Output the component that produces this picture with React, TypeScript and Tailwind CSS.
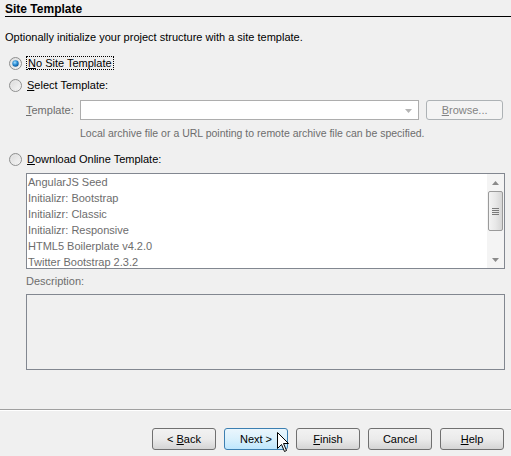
import React from "react";

function Radio({ checked }: { checked?: boolean }) {
  return (
    <svg width="13" height="13" viewBox="0 0 13 13" className="shrink-0">
      <defs>
        <linearGradient id={checked ? "rg1" : "rg0"} x1="0" y1="0" x2="1" y2="1">
          <stop offset="0" stopColor="#d6d6d6" />
          <stop offset="1" stopColor="#fbfbfb" />
        </linearGradient>
        <radialGradient id="dot" cx="0.4" cy="0.35" r="0.7">
          <stop offset="0" stopColor="#a9e0ff" />
          <stop offset="0.5" stopColor="#2b8fd6" />
          <stop offset="1" stopColor="#0c4f8f" />
        </radialGradient>
      </defs>
      <circle cx="6.5" cy="6.5" r="6" fill={`url(#${checked ? "rg1" : "rg0"})`} stroke="#8e8f8f" strokeWidth="1" />
      <circle cx="6.5" cy="6.5" r="4.3" fill="none" stroke="#e8e8e8" strokeWidth="0.8" />
      {checked && <circle cx="6.5" cy="6.5" r="3.2" fill="url(#dot)" />}
    </svg>
  );
}

function Btn({ children, active }: { children: React.ReactNode; active?: boolean }) {
  return (
    <div
      className={
        "w-[64px] h-[22px] flex items-center justify-center rounded-[3px] border text-[11px] text-black " +
        (active
          ? "border-[#3c7fb1] bg-gradient-to-b from-[#eaf6fd] via-[#d9f0fc] to-[#bee6fd]"
          : "border-[#707070] bg-gradient-to-b from-[#f2f2f2] via-[#ebebeb] to-[#d4d4d4]")
      }
    >
      {children}
    </div>
  );
}

export default function App() {
  const items = [
    "AngularJS Seed",
    "Initializr: Bootstrap",
    "Initializr: Classic",
    "Initializr: Responsive",
    "HTML5 Boilerplate v4.2.0",
    "Twitter Bootstrap 2.3.2",
  ];
  return (
    <div
      className="w-[511px] h-[456px] bg-[#f0f0f0] relative overflow-hidden text-[11px] text-black"
      style={{ fontFamily: '"Liberation Sans", Arial, sans-serif' }}
    >
      <div className="pl-[5px] pt-[3px]">
        <div className="font-bold text-[12px] leading-[13px] h-[13px] text-black">Site Template</div>
        <div className="h-[1px] bg-black"></div>
      </div>
      <div className="pl-[5px] mt-[14px] leading-[13px] h-[13px]">
        Optionally initialize your project structure with a site template.
      </div>
      <div className="pl-[9px] mt-[12px] flex items-center gap-[4px] h-[14px]">
        <Radio checked />
        <span className="border border-dotted border-black px-[1px] leading-[12px]">
          <u>N</u>o Site Template
        </span>
      </div>
      <div className="pl-[9px] mt-[8px] flex items-center gap-[5px] h-[14px]">
        <Radio />
        <span>
          <u>S</u>elect Template:
        </span>
      </div>
      <div className="pl-[26px] mt-[8px] flex items-center h-[20px] pr-[8px]">
        <span className="w-[54px] text-[#6d6d6d]">
          <u>T</u>emplate:
        </span>
        <div className="w-[340px] h-[20px] bg-white border border-[#adadad] relative">
          <svg width="7" height="4" className="absolute right-[6px] top-[8px]" viewBox="0 0 7 4">
            <path d="M0 0 L7 0 L3.5 4 Z" fill="#b5b5b5" />
          </svg>
        </div>
        <div className="ml-[7px] w-[77px] h-[20px] border border-[#adb2b5] rounded-[3px] bg-[#f4f4f4] flex items-center justify-center text-[#838383]">
          <span>
            <u>B</u>rowse...
          </span>
        </div>
      </div>
      <div className="pl-[80px] mt-[7px] h-[12px] text-[10.5px] text-[#6d6d6d] leading-[12px]">
        Local archive file or a URL pointing to remote archive file can be specified.
      </div>
      <div className="pl-[9px] mt-[13px] flex items-center gap-[5px] h-[14px]">
        <Radio />
        <span>
          <u>D</u>ownload Online Template:
        </span>
      </div>
      <div className="ml-[26px] mt-[7px] w-[479px] h-[96px] bg-white border border-[#828790] flex overflow-hidden">
        <div className="flex-1 overflow-hidden">
          {items.map((t) => (
            <div key={t} className="h-[16px] leading-[16px] pl-[1px] text-[#6d6d6d] whitespace-nowrap">
              {t}
            </div>
          ))}
        </div>
        <div className="w-[17px] h-full bg-[#f4f4f4] flex flex-col items-center">
          <div className="h-[17px] w-full flex items-center justify-center">
            <svg width="7" height="4" viewBox="0 0 7 4">
              <path d="M0 4 L7 4 L3.5 0 Z" fill="#8a8a8a" />
            </svg>
          </div>
          <div className="w-[15px] h-[40px] border border-[#9a9a9a] rounded-[2px] bg-gradient-to-r from-[#f3f3f3] via-[#e8e8e8] to-[#d6d6d6] flex flex-col items-center justify-center gap-[1px]">
            <div className="w-[7px] h-[1px] bg-[#7a7a7a]"></div>
            <div className="w-[7px] h-[1px] bg-[#7a7a7a]"></div>
            <div className="w-[7px] h-[1px] bg-[#7a7a7a]"></div>
            <div className="w-[7px] h-[1px] bg-[#7a7a7a]"></div>
          </div>
          <div className="flex-1"></div>
          <div className="h-[17px] w-full flex items-center justify-center">
            <svg width="7" height="4" viewBox="0 0 7 4">
              <path d="M0 0 L7 0 L3.5 4 Z" fill="#8a8a8a" />
            </svg>
          </div>
        </div>
      </div>
      <div className="pl-[26px] mt-[6px] h-[13px] text-[#6d6d6d] leading-[13px]">Description:</div>
      <div className="ml-[26px] mt-[6px] w-[479px] h-[76px] border border-[#828790] bg-[#f0f0f0]"></div>
      <div className="mt-[39px] h-[1px] bg-[#a0a0a0]"></div>
      <div className="h-[1px] bg-white"></div>
      <div className="mt-[17px] flex justify-end gap-[8px] pr-[7px]">
        <Btn>
          <span>
            &lt; <u>B</u>ack
          </span>
        </Btn>
        <Btn active>
          <span>Next &gt;</span>
        </Btn>
        <Btn>
          <span>
            <u>F</u>inish
          </span>
        </Btn>
        <Btn>
          <span>Cancel</span>
        </Btn>
        <Btn>
          <span>
            <u>H</u>elp
          </span>
        </Btn>
      </div>
      <svg
        width="13"
        height="21"
        viewBox="0 0 13 21"
        className="absolute left-[277px] top-[432px]"
      >
        <path
          d="M0.5 0.5 L0.5 16.5 L4.5 12.5 L7.5 19.5 L9.5 18.5 L6.5 11.5 L11.5 11.5 Z"
          fill="white"
          stroke="black"
          strokeWidth="1"
          strokeLinejoin="miter"
        />
      </svg>
    </div>
  );
}
